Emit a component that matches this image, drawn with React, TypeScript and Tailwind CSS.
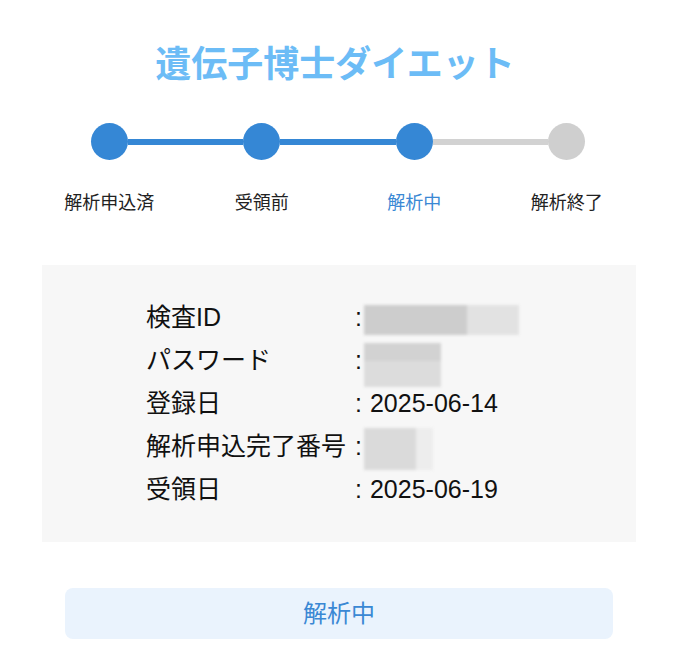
import React from "react";

type Step = { label: string };

const STEPS: Step[] = [
  { label: "解析申込済" },
  { label: "受領前" },
  { label: "解析中" },
  { label: "解析終了" },
];

const CURRENT = 2;

const FONT = {
  fontFamily: '"Liberation Sans", "Noto Sans CJK JP", sans-serif',
};

function Stepper() {
  return (
    <div className="ml-[33px] grid w-[610px] grid-cols-4">
      {STEPS.map((step, i) => {
        const leftOn = i <= CURRENT;
        const rightOn = i + 1 <= CURRENT;
        return (
          <div key={step.label} className="flex flex-col items-center">
            <div className="flex h-[37px] w-full items-center">
              <div
                className={`h-[6px] flex-1 ${
                  i === 0 ? "bg-transparent" : leftOn ? "bg-[#3587d5]" : "bg-[#d2d2d2]"
                }`}
              />
              <div
                className={`h-[37px] w-[37px] shrink-0 rounded-full ${
                  i <= CURRENT ? "bg-[#3587d5]" : "bg-[#cfcfcf]"
                }`}
              />
              <div
                className={`h-[6px] flex-1 ${
                  i === STEPS.length - 1
                    ? "bg-transparent"
                    : rightOn
                      ? "bg-[#3587d5]"
                      : "bg-[#d2d2d2]"
                }`}
              />
            </div>
            <span
              className={`mt-[30px] text-[18px] leading-[27px] ${
                i === CURRENT ? "text-[#3a88d4]" : "text-[#222]"
              }`}
            >
              {step.label}
            </span>
          </div>
        );
      })}
    </div>
  );
}

function Masked({ parts, h, dy = 0 }: { parts: { w: number; c: string }[]; h: number; dy?: number }) {
  return (
    <span
      className="ml-[2px] inline-flex blur-[1.5px]"
      style={{ height: h, transform: `translateY(${dy}px)` }}
    >
      {parts.map((p, i) => (
        <span key={i} style={{ width: p.w, background: p.c }} />
      ))}
    </span>
  );
}

function Row({ label, children }: { label: string; children: React.ReactNode }) {
  return (
    <div className="flex h-[43px] items-center">
      <span className="w-[209px] shrink-0 whitespace-nowrap">{label}</span>
      <span className="flex items-center">
        <span>:</span>
        {children}
      </span>
    </div>
  );
}

export default function App() {
  return (
    <div className="min-h-[663px] w-[680px] bg-white text-[#111]" style={FONT}>
      <h1 className="pt-[38px] pr-[10px] text-center text-[36px] font-bold leading-[54px] text-[#6cbcf6]">
        遺伝子博士ダイエット
      </h1>

      <div className="mt-[31px]">
        <Stepper />
      </div>

      <div className="ml-[42px] mt-[48px] w-[594px] bg-[#f7f7f7] py-[31px] pl-[104px] text-[25px]">
        <Row label="検査ID">
          <Masked
            h={30}
            dy={2}
            parts={[
              { w: 103, c: "#cdcdcd" },
              { w: 52, c: "#e2e2e2" },
            ]}
          />
        </Row>
        <Row label="パスワード">
          <span className="ml-[2px] flex translate-y-[4px] flex-col blur-[1.5px]">
            <span className="h-[18px] w-[77px] bg-[#d2d2d2]" />
            <span className="h-[26px] w-[77px] bg-[#dcdcdc]" />
          </span>
        </Row>
        <Row label="登録日">
          <span className="ml-[8px]">2025-06-14</span>
        </Row>
        <Row label="解析申込完了番号">
          <Masked
            h={42}
            dy={2}
            parts={[
              { w: 52, c: "#dadada" },
              { w: 17, c: "#ededed" },
            ]}
          />
        </Row>
        <Row label="受領日">
          <span className="ml-[8px]">2025-06-19</span>
        </Row>
      </div>

      <div className="ml-[65px] mt-[46px] flex h-[51px] w-[548px] items-center justify-center rounded-[8px] bg-[#eaf3fd] text-[24px] text-[#3a88d4]">
        解析中
      </div>
    </div>
  );
}
